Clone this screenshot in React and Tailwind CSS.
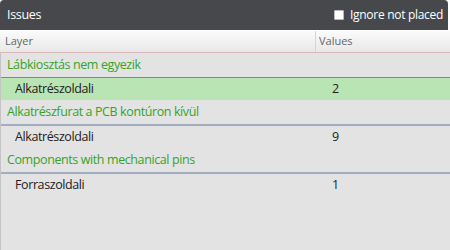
import React from 'react';

const groups = [
  { name: 'Lábkiosztás nem egyezik', layer: 'Alkatrészoldali', value: '2', selected: true },
  { name: 'Alkatrészfurat a PCB kontúron kívül', layer: 'Alkatrészoldali', value: '9' },
  { name: 'Components with mechanical pins', layer: 'Forraszoldali', value: '1' },
];

export default function App() {
  return (
    <div className="w-[450px] h-[250px] bg-white overflow-hidden flex flex-col font-['Open_Sans',sans-serif]">
      {/* Title bar */}
      <div className="h-[30px] shrink-0 mr-[2px] bg-[#47484c] rounded-t-[4px] flex items-center justify-between pl-[7px] pr-[5px] text-white text-[12px] tracking-[-0.3px]">
        <span className="text-[12.5px]">Issues</span>
        <label className="flex items-center gap-[6px]">
          <span className="w-[10px] h-[10px] bg-white rounded-[1px] border border-[#bbb]" />
          <span>Ignore not placed</span>
        </label>
      </div>

      {/* Column header */}
      <div className="h-[22px] shrink-0 mt-[1px] flex text-[11px] text-[#666] bg-gradient-to-b from-[#fbfbfb] to-[#e8e8e8] border-b border-[#d9b9b9]">
        <div className="w-[316px] pl-[5px] flex items-center border-r border-[#d6d6d6]">Layer</div>
        <div className="flex-1 pl-[3px] flex items-center">Values</div>
      </div>

      {/* Rows */}
      <div className="flex-1 bg-[#e3e3e3] border-l border-[#c4c4c4] text-[12.5px] tracking-[-0.4px]">
        {groups.map((g, i) => (
          <div key={i}>
            <div
              className={
                'flex items-center pl-[6px] text-[#36a326] ' +
                (g.selected ? 'h-[25px] border-b border-[#6f88b8]' : 'h-[26px] border-b-2 border-[#a3adc0]')
              }
            >
              {g.name}
            </div>
            <div className={'h-[22px] flex items-center text-[#222] ' + (g.selected ? 'bg-[#b9e4b3]' : '')}>
              <div className="w-[315px] pl-[14px]">{g.layer}</div>
              <div className="pl-[16px]">{g.value}</div>
            </div>
          </div>
        ))}
      </div>
    </div>
  );
}
